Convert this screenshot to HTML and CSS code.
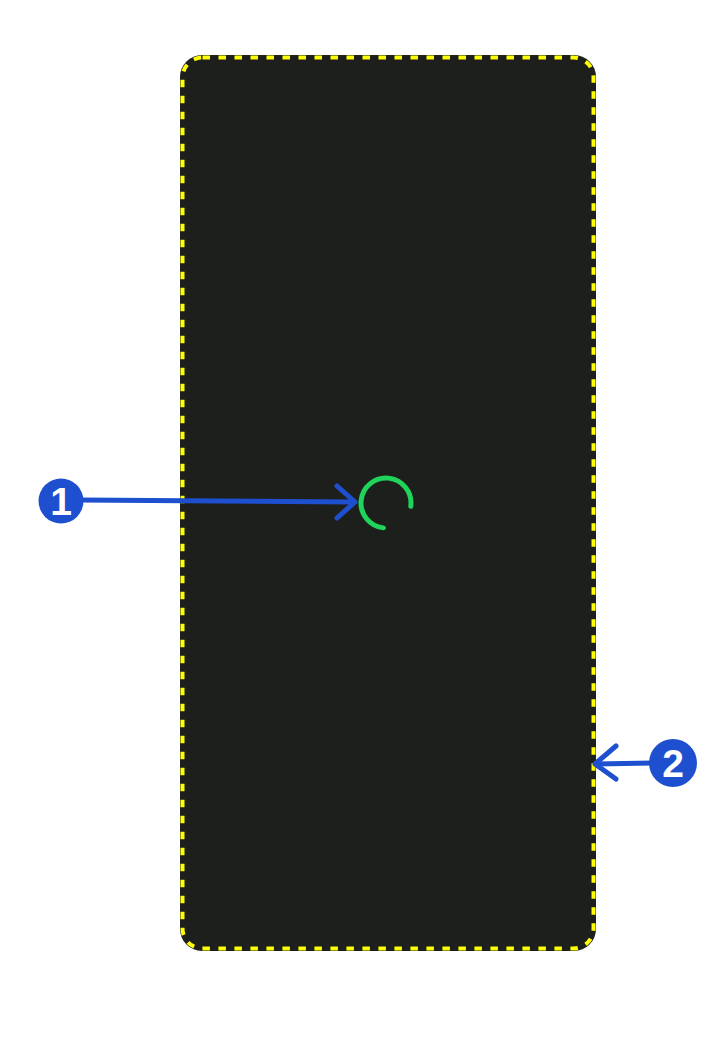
FILE: index.html
```html
<!DOCTYPE html>
<html>
<head>
<meta charset="utf-8">
<link rel="stylesheet" href="styles.css">
</head>
<body>
<div class="stage">
  <div class="phone">
    <svg class="frame" width="416" height="896" viewBox="0 0 416 896">
      <rect x="2.5" y="2.5" width="411" height="891" rx="20" ry="20" fill="none" stroke="#ffff00" stroke-width="4" stroke-dasharray="7.5 8.5"/>
    </svg>
    <svg class="spinner" width="60" height="60" viewBox="0 0 60 60">
      <circle cx="30" cy="30" r="25" fill="none" stroke="#1fd35b" stroke-width="5" stroke-linecap="round" stroke-dasharray="117.8 200" transform="rotate(96 30 30)"/>
    </svg>
  </div>
</div>
<svg class="callouts" width="720" height="1045" viewBox="0 0 720 1045">
  <g stroke="#1d4fcf" stroke-width="5" stroke-linecap="round" stroke-linejoin="round" fill="none">
    <line x1="80" y1="500" x2="354" y2="502"/>
    <polyline points="337,486 355,502 337,518"/>
    <line x1="652" y1="763" x2="596" y2="764"/>
    <polyline points="616,746 595,764 616,779"/>
  </g>
  <circle cx="61" cy="501" r="22.5" fill="#1d4fcf"/>
  <circle cx="673" cy="763" r="24" fill="#1d4fcf"/>
  <text class="num" x="61" y="515" text-anchor="middle">1</text>
  <text class="num" x="673" y="777" text-anchor="middle">2</text>
</svg>
</body>
</html>
```
FILE: styles.css
```css
html, body {
  margin: 0;
  padding: 0;
  background: #ffffff;
}
.stage {
  padding: 55px 0 0 180px;
}
.phone {
  position: relative;
  box-sizing: border-box;
  width: 416px;
  height: 896px;
  background: #1d1f1c;
  border-radius: 22px;
  display: flex;
  align-items: center;
  justify-content: center;
}
.frame {
  position: absolute;
  left: 0;
  top: 0;
}
.spinner {
  margin-right: 4px;
}
.callouts {
  position: absolute;
  left: 0;
  top: 0;
  pointer-events: none;
}
.num {
  font-family: "Liberation Sans", Arial, sans-serif;
  font-weight: 700;
  font-size: 39px;
  fill: #ffffff;
}
```
